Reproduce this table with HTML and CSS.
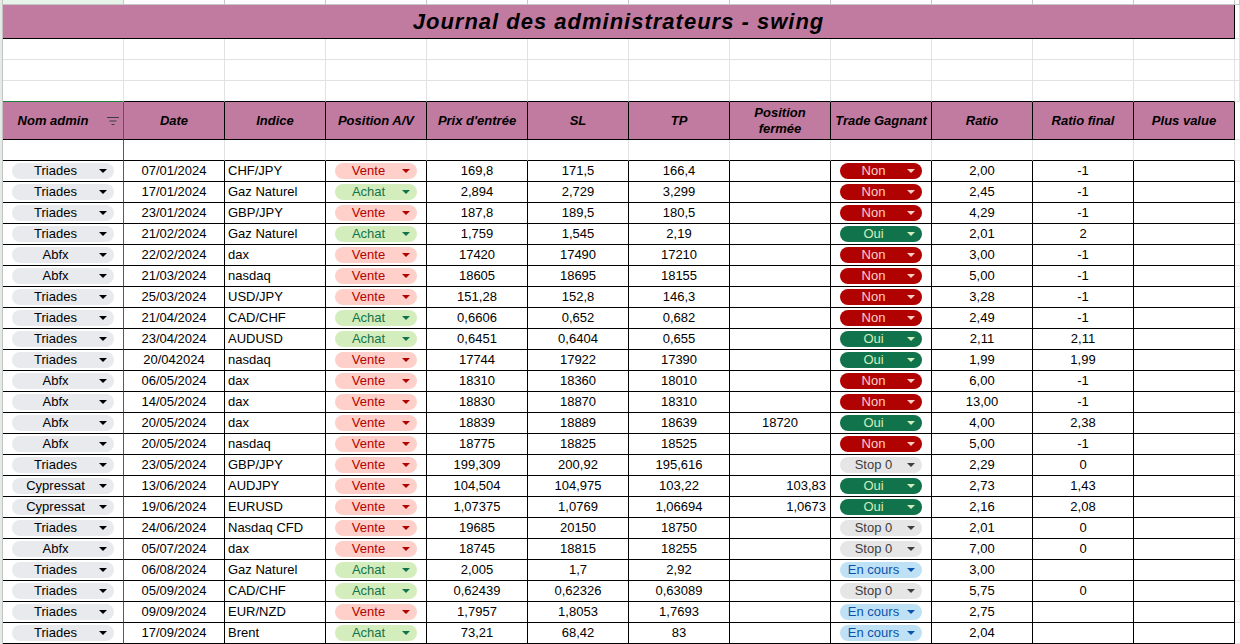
FILE: index.html
```html
<!DOCTYPE html>
<html lang="fr">
<head>
<meta charset="utf-8">
<title>Journal des administrateurs - swing</title>
<link rel="stylesheet" href="styles.css">
</head>
<body>
<div class="sheet">
  <div class="edge"></div>

  <div class="t sel"></div><div class="t"></div><div class="t"></div><div class="t"></div><div class="t"></div><div class="t"></div><div class="t"></div><div class="t"></div><div class="t"></div><div class="t"></div><div class="t"></div><div class="t"></div><div class="t"></div>

  <div class="title">Journal des administrateurs - swing</div><div class="e"></div>

  <div class="e"></div><div class="e"></div><div class="e"></div><div class="e"></div><div class="e"></div><div class="e"></div><div class="e"></div><div class="e"></div><div class="e"></div><div class="e"></div><div class="e"></div><div class="e"></div><div class="e"></div>
  <div class="e"></div><div class="e"></div><div class="e"></div><div class="e"></div><div class="e"></div><div class="e"></div><div class="e"></div><div class="e"></div><div class="e"></div><div class="e"></div><div class="e"></div><div class="e"></div><div class="e"></div>
  <div class="e ga"></div><div class="e bk"></div><div class="e bk"></div><div class="e bk"></div><div class="e bk"></div><div class="e bk"></div><div class="e bk"></div><div class="e bk"></div><div class="e bk"></div><div class="e bk"></div><div class="e bk"></div><div class="e bk"></div><div class="e"></div>

  <div class="h a"><span class="ht">Nom admin</span><svg class="flt" viewBox="0 0 12 8"><path d="M0 0.5H12M2.5 4H9.5M4.5 7.5H7.5" stroke="#3c3c3c" stroke-width="1.1" fill="none"/></svg></div>
  <div class="h">Date</div>
  <div class="h">Indice</div>
  <div class="h">Position A/V</div>
  <div class="h">Prix d'entrée</div>
  <div class="h">SL</div>
  <div class="h">TP</div>
  <div class="h">Position<br>fermée</div>
  <div class="h">Trade Gagnant</div>
  <div class="h">Ratio</div>
  <div class="h">Ratio final</div>
  <div class="h">Plus value</div>
  <div class="f"></div>

  <div class="e bk gr"></div><div class="e bk"></div><div class="e bk"></div><div class="e bk"></div><div class="e bk"></div><div class="e bk"></div><div class="e bk"></div><div class="e bk"></div><div class="e bk"></div><div class="e bk"></div><div class="e bk"></div><div class="e bk"></div><div class="f"></div>

  <div class="d a"><span class="chip adm">Triades</span></div><div class="d">07/01/2024</div><div class="d l">CHF/JPY</div><div class="d"><span class="chip ve">Vente</span></div><div class="d">169,8</div><div class="d">171,5</div><div class="d">166,4</div><div class="d"></div><div class="d"><span class="chip no">Non</span></div><div class="d">2,00</div><div class="d">-1</div><div class="d"></div><div class="f"></div>

  <div class="d a"><span class="chip adm">Triades</span></div><div class="d">17/01/2024</div><div class="d l">Gaz Naturel</div><div class="d"><span class="chip ac">Achat</span></div><div class="d">2,894</div><div class="d">2,729</div><div class="d">3,299</div><div class="d"></div><div class="d"><span class="chip no">Non</span></div><div class="d">2,45</div><div class="d">-1</div><div class="d"></div><div class="f"></div>

  <div class="d a"><span class="chip adm">Triades</span></div><div class="d">23/01/2024</div><div class="d l">GBP/JPY</div><div class="d"><span class="chip ve">Vente</span></div><div class="d">187,8</div><div class="d">189,5</div><div class="d">180,5</div><div class="d"></div><div class="d"><span class="chip no">Non</span></div><div class="d">4,29</div><div class="d">-1</div><div class="d"></div><div class="f"></div>

  <div class="d a"><span class="chip adm">Triades</span></div><div class="d">21/02/2024</div><div class="d l">Gaz Naturel</div><div class="d"><span class="chip ac">Achat</span></div><div class="d">1,759</div><div class="d">1,545</div><div class="d">2,19</div><div class="d"></div><div class="d"><span class="chip oui">Oui</span></div><div class="d">2,01</div><div class="d">2</div><div class="d"></div><div class="f"></div>

  <div class="d a"><span class="chip adm">Abfx</span></div><div class="d">22/02/2024</div><div class="d l">dax</div><div class="d"><span class="chip ve">Vente</span></div><div class="d">17420</div><div class="d">17490</div><div class="d">17210</div><div class="d"></div><div class="d"><span class="chip no">Non</span></div><div class="d">3,00</div><div class="d">-1</div><div class="d"></div><div class="f"></div>

  <div class="d a"><span class="chip adm">Abfx</span></div><div class="d">21/03/2024</div><div class="d l">nasdaq</div><div class="d"><span class="chip ve">Vente</span></div><div class="d">18605</div><div class="d">18695</div><div class="d">18155</div><div class="d"></div><div class="d"><span class="chip no">Non</span></div><div class="d">5,00</div><div class="d">-1</div><div class="d"></div><div class="f"></div>

  <div class="d a"><span class="chip adm">Triades</span></div><div class="d">25/03/2024</div><div class="d l">USD/JPY</div><div class="d"><span class="chip ve">Vente</span></div><div class="d">151,28</div><div class="d">152,8</div><div class="d">146,3</div><div class="d"></div><div class="d"><span class="chip no">Non</span></div><div class="d">3,28</div><div class="d">-1</div><div class="d"></div><div class="f"></div>

  <div class="d a"><span class="chip adm">Triades</span></div><div class="d">21/04/2024</div><div class="d l">CAD/CHF</div><div class="d"><span class="chip ac">Achat</span></div><div class="d">0,6606</div><div class="d">0,652</div><div class="d">0,682</div><div class="d"></div><div class="d"><span class="chip no">Non</span></div><div class="d">2,49</div><div class="d">-1</div><div class="d"></div><div class="f"></div>

  <div class="d a"><span class="chip adm">Triades</span></div><div class="d">23/04/2024</div><div class="d l">AUDUSD</div><div class="d"><span class="chip ac">Achat</span></div><div class="d">0,6451</div><div class="d">0,6404</div><div class="d">0,655</div><div class="d"></div><div class="d"><span class="chip oui">Oui</span></div><div class="d">2,11</div><div class="d">2,11</div><div class="d"></div><div class="f"></div>

  <div class="d a"><span class="chip adm">Triades</span></div><div class="d">20/042024</div><div class="d l">nasdaq</div><div class="d"><span class="chip ve">Vente</span></div><div class="d">17744</div><div class="d">17922</div><div class="d">17390</div><div class="d"></div><div class="d"><span class="chip oui">Oui</span></div><div class="d">1,99</div><div class="d">1,99</div><div class="d"></div><div class="f"></div>

  <div class="d a"><span class="chip adm">Abfx</span></div><div class="d">06/05/2024</div><div class="d l">dax</div><div class="d"><span class="chip ve">Vente</span></div><div class="d">18310</div><div class="d">18360</div><div class="d">18010</div><div class="d"></div><div class="d"><span class="chip no">Non</span></div><div class="d">6,00</div><div class="d">-1</div><div class="d"></div><div class="f"></div>

  <div class="d a"><span class="chip adm">Abfx</span></div><div class="d">14/05/2024</div><div class="d l">dax</div><div class="d"><span class="chip ve">Vente</span></div><div class="d">18830</div><div class="d">18870</div><div class="d">18310</div><div class="d"></div><div class="d"><span class="chip no">Non</span></div><div class="d">13,00</div><div class="d">-1</div><div class="d"></div><div class="f"></div>

  <div class="d a"><span class="chip adm">Abfx</span></div><div class="d">20/05/2024</div><div class="d l">dax</div><div class="d"><span class="chip ve">Vente</span></div><div class="d">18839</div><div class="d">18889</div><div class="d">18639</div><div class="d">18720</div><div class="d"><span class="chip oui">Oui</span></div><div class="d">4,00</div><div class="d">2,38</div><div class="d"></div><div class="f"></div>

  <div class="d a"><span class="chip adm">Abfx</span></div><div class="d">20/05/2024</div><div class="d l">nasdaq</div><div class="d"><span class="chip ve">Vente</span></div><div class="d">18775</div><div class="d">18825</div><div class="d">18525</div><div class="d"></div><div class="d"><span class="chip no">Non</span></div><div class="d">5,00</div><div class="d">-1</div><div class="d"></div><div class="f"></div>

  <div class="d a"><span class="chip adm">Triades</span></div><div class="d">23/05/2024</div><div class="d l">GBP/JPY</div><div class="d"><span class="chip ve">Vente</span></div><div class="d">199,309</div><div class="d">200,92</div><div class="d">195,616</div><div class="d"></div><div class="d"><span class="chip st">Stop 0</span></div><div class="d">2,29</div><div class="d">0</div><div class="d"></div><div class="f"></div>

  <div class="d a"><span class="chip adm">Cypressat</span></div><div class="d">13/06/2024</div><div class="d l">AUDJPY</div><div class="d"><span class="chip ve">Vente</span></div><div class="d">104,504</div><div class="d">104,975</div><div class="d">103,22</div><div class="d r">103,83</div><div class="d"><span class="chip oui">Oui</span></div><div class="d">2,73</div><div class="d">1,43</div><div class="d"></div><div class="f"></div>

  <div class="d a"><span class="chip adm">Cypressat</span></div><div class="d">19/06/2024</div><div class="d l">EURUSD</div><div class="d"><span class="chip ve">Vente</span></div><div class="d">1,07375</div><div class="d">1,0769</div><div class="d">1,06694</div><div class="d r">1,0673</div><div class="d"><span class="chip oui">Oui</span></div><div class="d">2,16</div><div class="d">2,08</div><div class="d"></div><div class="f"></div>

  <div class="d a"><span class="chip adm">Triades</span></div><div class="d">24/06/2024</div><div class="d l">Nasdaq CFD</div><div class="d"><span class="chip ve">Vente</span></div><div class="d">19685</div><div class="d">20150</div><div class="d">18750</div><div class="d"></div><div class="d"><span class="chip st">Stop 0</span></div><div class="d">2,01</div><div class="d">0</div><div class="d"></div><div class="f"></div>

  <div class="d a"><span class="chip adm">Abfx</span></div><div class="d">05/07/2024</div><div class="d l">dax</div><div class="d"><span class="chip ve">Vente</span></div><div class="d">18745</div><div class="d">18815</div><div class="d">18255</div><div class="d"></div><div class="d"><span class="chip st">Stop 0</span></div><div class="d">7,00</div><div class="d">0</div><div class="d"></div><div class="f"></div>

  <div class="d a"><span class="chip adm">Triades</span></div><div class="d">06/08/2024</div><div class="d l">Gaz Naturel</div><div class="d"><span class="chip ac">Achat</span></div><div class="d">2,005</div><div class="d">1,7</div><div class="d">2,92</div><div class="d"></div><div class="d"><span class="chip ec">En cours</span></div><div class="d">3,00</div><div class="d"></div><div class="d"></div><div class="f"></div>

  <div class="d a"><span class="chip adm">Triades</span></div><div class="d">05/09/2024</div><div class="d l">CAD/CHF</div><div class="d"><span class="chip ac">Achat</span></div><div class="d">0,62439</div><div class="d">0,62326</div><div class="d">0,63089</div><div class="d"></div><div class="d"><span class="chip st">Stop 0</span></div><div class="d">5,75</div><div class="d">0</div><div class="d"></div><div class="f"></div>

  <div class="d a"><span class="chip adm">Triades</span></div><div class="d">09/09/2024</div><div class="d l">EUR/NZD</div><div class="d"><span class="chip ve">Vente</span></div><div class="d">1,7957</div><div class="d">1,8053</div><div class="d">1,7693</div><div class="d"></div><div class="d"><span class="chip ec">En cours</span></div><div class="d">2,75</div><div class="d"></div><div class="d"></div><div class="f"></div>

  <div class="d a"><span class="chip adm">Triades</span></div><div class="d">17/09/2024</div><div class="d l">Brent</div><div class="d"><span class="chip ac">Achat</span></div><div class="d">73,21</div><div class="d">68,42</div><div class="d">83</div><div class="d"></div><div class="d"><span class="chip ec">En cours</span></div><div class="d">2,04</div><div class="d"></div><div class="d"></div><div class="f"></div>
</div>
</body>
</html>
```

FILE: styles.css
```css
* { box-sizing: border-box; }

body {
  margin: 0;
  background: #fff;
  font-family: "Liberation Sans", Arial, sans-serif;
  font-size: 13px;
  color: #000;
  overflow: hidden;
}

.sheet {
  display: grid;
  grid-template-columns: 3px 121px repeat(11, 101px) 5px;
  grid-template-rows: 5px 34px repeat(3, 21px) 38px 21px repeat(23, 21px);
  width: 1240px;
  height: 644px;
}

.edge {
  grid-column: 1;
  grid-row: 1 / -1;
  background: #e3ebe4;
  border-right: 1px solid #c4c4c4;
}

.t {
  border-right: 1px solid #c6c6c6;
  border-bottom: 1px solid #c6c6c6;
}
.t.sel { background: #e6f4ea; }

.title {
  grid-column: span 12;
  background: #c27ba0;
  border-right: 1px solid #000;
  border-bottom: 1px solid #000;
  display: flex;
  align-items: center;
  justify-content: center;
  font-size: 22px;
  font-weight: bold;
  font-style: italic;
  letter-spacing: 1px;
  white-space: nowrap;
}

.e {
  border-right: 1px solid #e2e2e2;
  border-bottom: 1px solid #e2e2e2;
}
.e.bk { border-bottom-color: #000; }
.e.ga { border-bottom-color: #188038; }
.e.gr { border-right-color: #188038; }

.f { border-bottom: 1px solid #e2e2e2; }

.h {
  background: #c27ba0;
  border-right: 1px solid #000;
  border-bottom: 1px solid #000;
  display: flex;
  align-items: center;
  justify-content: center;
  text-align: center;
  font-weight: bold;
  font-style: italic;
  line-height: 16px;
  white-space: nowrap;
}
.h.a { border-right-color: #188038; }
.ht { flex: 1; text-align: center; }
.flt { flex: none; width: 12px; height: 8px; margin: 0 4px; }

.d {
  border-right: 1px solid #000;
  border-bottom: 1px solid #000;
  display: flex;
  align-items: center;
  justify-content: center;
  white-space: nowrap;
  overflow: hidden;
  line-height: 16px;
}
.d.a { border-right-color: #188038; }
.d.l { justify-content: flex-start; padding-left: 3px; }
.d.r { justify-content: flex-end; padding-right: 4px; }

.chip {
  width: calc(100% - 18px);
  height: 16px;
  border-radius: 8px;
  display: grid;
  grid-template-columns: 1fr 8px;
  align-items: center;
  text-align: center;
  line-height: 16px;
  padding-right: 7px;
}
.chip::after {
  content: "";
  width: 0;
  height: 0;
  border-left: 4px solid transparent;
  border-right: 4px solid transparent;
  border-top: 4px solid currentColor;
}

.adm { background: #e8eaed; color: #000; }
.ve { background: #ffcfc9; color: #b10202; }
.ac { background: #d4edbc; color: #11734b; }
.no { background: #b10202; color: #ffcfc9; }
.oui { background: #11734b; color: #d4edbc; }
.st { background: #e6e6e6; color: #3d3d3d; }
.ec { background: #bfe1f6; color: #0a53a8; }
```
